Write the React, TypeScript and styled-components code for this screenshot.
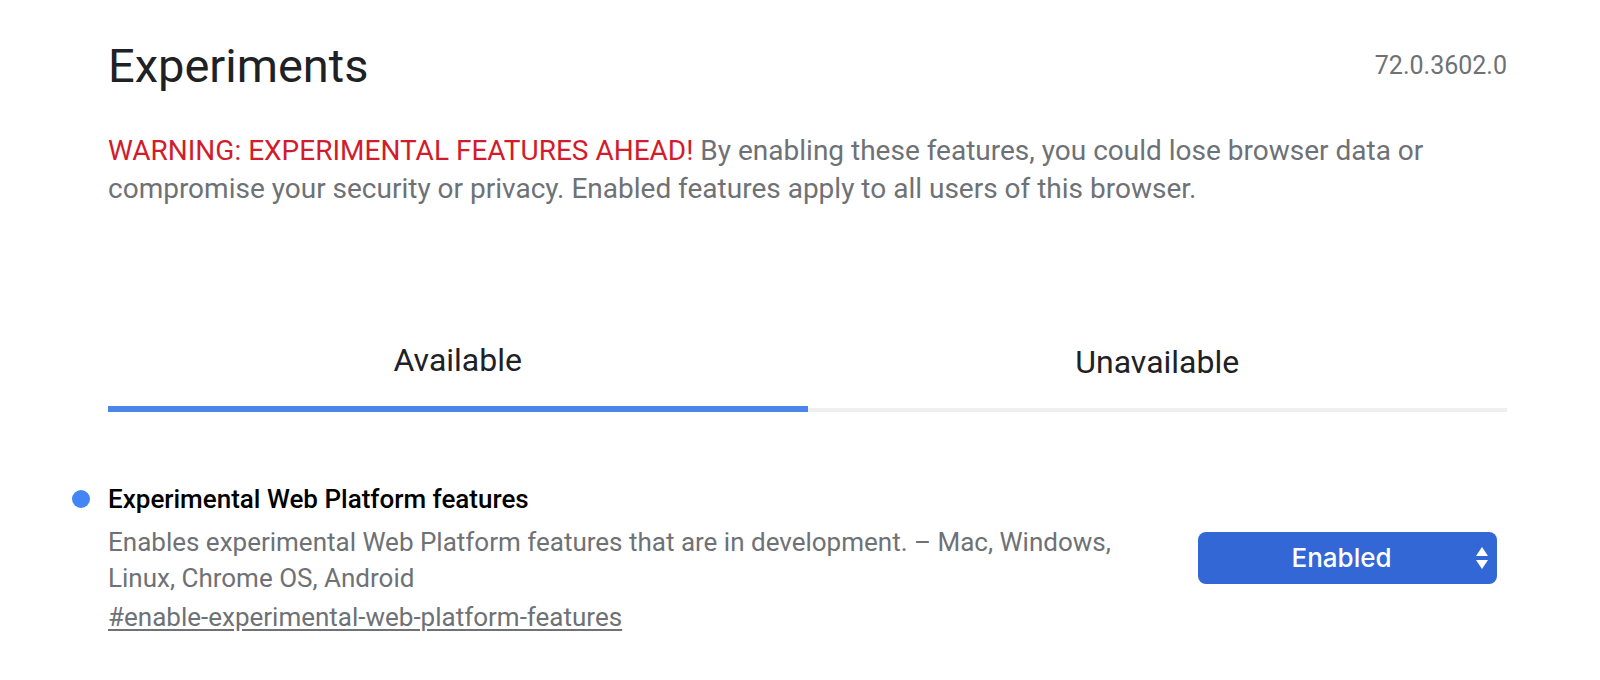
import React from "react";
import styled, { createGlobalStyle } from "styled-components";

const GlobalStyle = createGlobalStyle`
  html, body {
    margin: 0;
    padding: 0;
    background: #ffffff;
  }
  body {
    font-family: Roboto, "Noto Sans", "Liberation Sans", sans-serif;
    -webkit-font-smoothing: antialiased;
  }
`;

const Page = styled.main`
  box-sizing: border-box;
  width: 1600px;
  padding: 38px 93px 0 108px;
`;

const Header = styled.header`
  display: flex;
  justify-content: space-between;
  align-items: center;
`;

const Title = styled.h1`
  margin: 0;
  font-size: 47px;
  line-height: 56px;
  font-weight: 400;
  color: #202124;
`;

const Version = styled.span`
  font-size: 25px;
  line-height: 30px;
  color: #6e7175;
`;

const Warning = styled.p`
  margin: 38px 0 0;
  font-size: 28px;
  line-height: 38px;
  color: #6e7175;
`;

const Red = styled.span`
  color: #d21c2c;
`;

const Tabs = styled.div`
  display: grid;
  grid-template-columns: 1fr 1fr;
  align-items: end;
  margin-top: 132px;
`;

const Tab = styled.button<{ $active?: boolean }>`
  appearance: none;
  background: none;
  border: 0;
  margin: 0;
  font-family: inherit;
  font-size: 32px;
  line-height: 40px;
  color: #202124;
  text-align: center;
  padding: 0 0 26px;
  border-bottom: ${(p) => (p.$active ? "6px solid #4a86e8" : "4px solid #efefef")};
  cursor: pointer;
`;

const Feature = styled.section`
  display: flex;
  align-items: center;
  justify-content: space-between;
  margin-top: 69px;
`;

const Info = styled.div`
  position: relative;
  max-width: 1040px;
`;

const Dot = styled.span`
  position: absolute;
  left: -36px;
  top: 9px;
  width: 18px;
  height: 18px;
  border-radius: 50%;
  background: #4285f4;
`;

const FeatureTitle = styled.h2`
  margin: 0;
  font-size: 26px;
  line-height: 36px;
  font-weight: 500;
  color: #000000;
`;

const Description = styled.p`
  margin: 7px 0 0;
  font-size: 26px;
  line-height: 36px;
  color: #6e7175;
`;

const Permalink = styled.a`
  display: inline-block;
  margin-top: 3px;
  font-size: 26px;
  line-height: 36px;
  color: #6e7175;
  text-decoration: underline;
  text-underline-offset: 3px;
`;

const Select = styled.div`
  position: relative;
  box-sizing: border-box;
  width: 299px;
  height: 52px;
  margin: 0 10px 0 0;
  padding: 0 40px 0 28px;
  border-radius: 8px;
  background: #3367d6;
  color: #ffffff;
  font-family: Inter, "Liberation Sans", sans-serif;
  font-size: 26px;
  font-weight: 500;
  line-height: 52px;
  text-align: center;
`;

const Arrows = styled.svg`
  position: absolute;
  right: 8px;
  top: 14px;
`;

export default function App() {
  return (
    <>
      <GlobalStyle />
      <Page>
        <Header>
          <Title>Experiments</Title>
          <Version>72.0.3602.0</Version>
        </Header>
        <Warning>
          <Red>WARNING: EXPERIMENTAL FEATURES AHEAD!</Red> By enabling these features, you could
          lose browser data or compromise your security or privacy. Enabled features apply to all
          users of this browser.
        </Warning>
        <Tabs>
          <Tab $active>Available</Tab>
          <Tab>Unavailable</Tab>
        </Tabs>
        <Feature>
          <Info>
            <Dot />
            <FeatureTitle>Experimental Web Platform features</FeatureTitle>
            <Description>
              Enables experimental Web Platform features that are in development. – Mac, Windows,
              Linux, Chrome OS, Android
            </Description>
            <Permalink href="#enable-experimental-web-platform-features">
              #enable-experimental-web-platform-features
            </Permalink>
          </Info>
          <Select>
            Enabled
            <Arrows width="14" height="24" viewBox="0 0 14 24">
              <path d="M7 1 L13 10 H1 Z" fill="#ffffff" />
              <path d="M7 23 L13 14 H1 Z" fill="#ffffff" />
            </Arrows>
          </Select>
        </Feature>
      </Page>
    </>
  );
}
